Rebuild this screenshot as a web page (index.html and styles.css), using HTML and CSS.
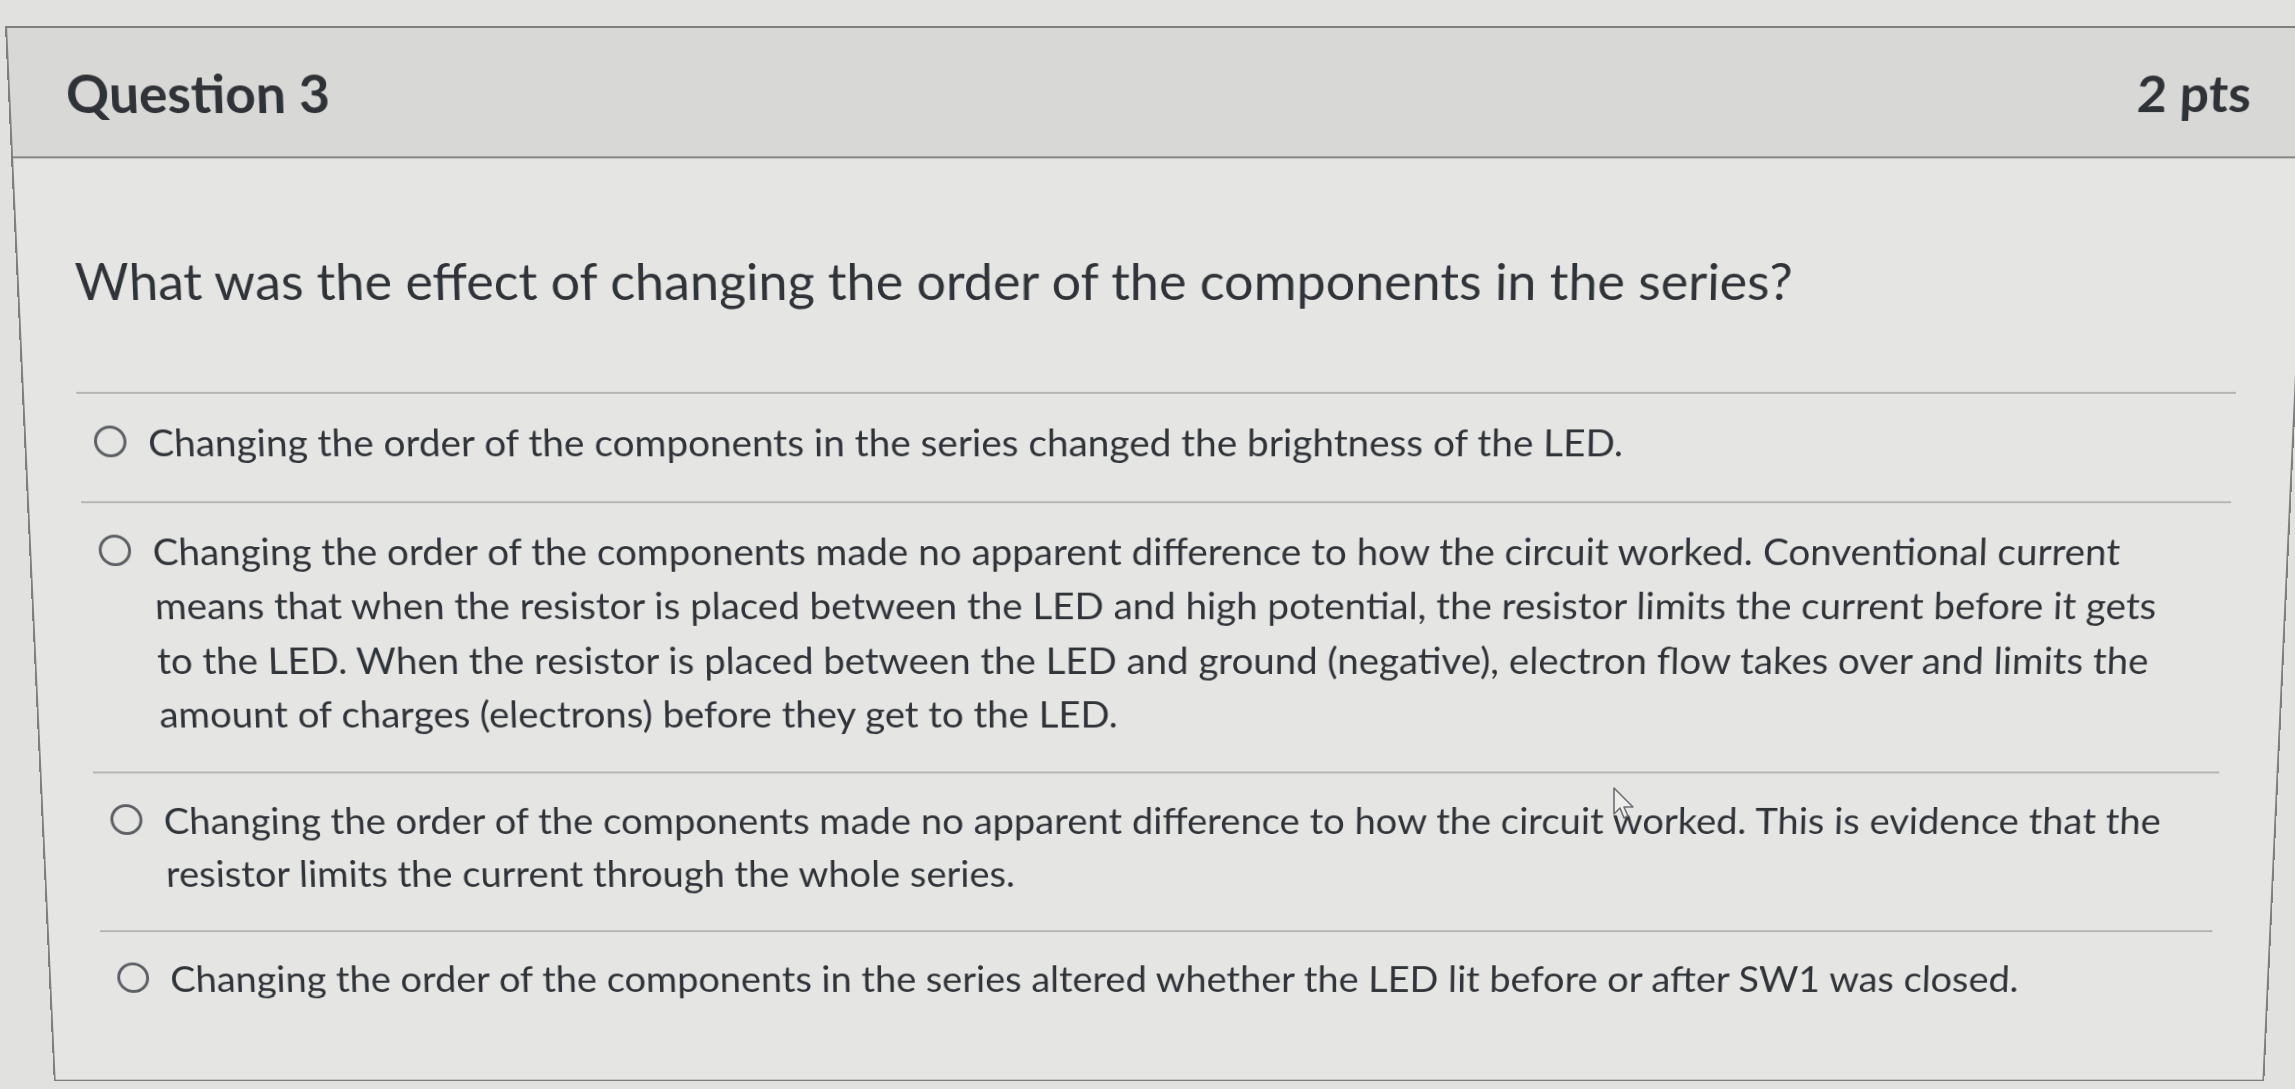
FILE: index.html
```html
<!DOCTYPE html>
<html lang="en">
<head>
    <meta charset="UTF-8">
    <title>Question 3</title>
    <link rel="stylesheet" href="styles.css">
</head>
<body>

<div class="question">
    <div class="question-header">
        <h2>Question 3</h2>
        <span class="points">2 pts</span>
    </div>

    <div class="question-body">
        <p class="question-text">What was the effect of changing the order of the components in the series?</p>

        <div class="answers">
            <label class="answer">
                <input type="radio" name="q3">
                <span>Changing the order of the components in the series changed the brightness of the LED.</span>
            </label>
            <label class="answer">
                <input type="radio" name="q3">
                <span>Changing the order of the components made no apparent difference to how the circuit worked. Conventional current means that when the resistor is placed between the LED and high potential, the resistor limits the current before it gets to the LED. When the resistor is placed between the LED and ground (negative), electron flow takes over and limits the amount of charges (electrons) before they get to the LED.</span>
            </label>
            <label class="answer">
                <input type="radio" name="q3">
                <span>Changing the order of the components made no apparent difference to how the circuit worked. This is evidence that the resistor limits the current through the whole series.</span>
            </label>
            <label class="answer">
                <input type="radio" name="q3">
                <span>Changing the order of the components in the series altered whether the LED lit before or after SW1 was closed.</span>
            </label>
        </div>
    </div>
</div>

<!-- mouse pointer resting over the third answer -->
<svg class="pointer" width="26" height="36" viewBox="0 0 26 36">
    <path d="M2 2 L2 28 L8 22 L12 32 L16 30 L12 21 L21 21 Z" fill="rgba(255,255,255,0.35)" stroke="#6d6f72" stroke-width="1.6" stroke-linejoin="round"/>
</svg>

</body>
</html>
```

FILE: styles.css
```css
html, body {
    overflow: hidden;
}

body {
    margin: 0;
    background-color: #e1e1df;
    font-family: Lato, "Noto Sans", sans-serif;
    color: #303439;
}

/* the card is seen slightly from above, so it leans back a little */
.question {
    width: 2308px;
    height: 1110px;
    margin: 26px 0 0 5px;
    border: 2px solid #7f7f7f;
    background-color: #e5e5e3;
    box-sizing: border-box;
    transform-origin: 1155px 0;
    transform: perspective(3000px) rotateX(-6.85deg);
}

.question-header {
    display: flex;
    justify-content: space-between;
    align-items: center;
    height: 132px;
    padding: 0 57px 0 56px;
    background-color: #d8d8d6;
    border-bottom: 2px solid #858585;
    box-sizing: border-box;
}

.question-header h2 {
    margin: 0;
    font-size: 53.5px;
    font-weight: 700;
    color: #2f3237;
}

.points {
    font-size: 52px;
    font-weight: 700;
    color: #2f3237;
}

.question-body {
    padding: 0 0 0 53px;
}

.question-text {
    margin: 0;
    padding: 94px 0 84px 4px;
    font-size: 52.6px;
    line-height: 62px;
}

.answers {
    width: 2192px;
    border-top: 2px solid #b4b4b2;
}

.answer {
    display: flex;
    align-items: flex-start;
    gap: 22px;
    padding: 21px 0 33px 16px;
    border-bottom: 2px solid #b4b4b2;
    font-size: 39.4px;
    line-height: 57.5px;
}

.answer:last-child {
    border-bottom: none;
}

.answer span {
    max-width: 2080px;
}

.answer input {
    appearance: none;
    flex: none;
    width: 33px;
    height: 33px;
    margin: 12px 0 0 0;
    border: 3px solid #5c5f63;
    border-radius: 50%;
    background: transparent;
}

.pointer {
    position: absolute;
    left: 1612px;
    top: 786px;
}
```
